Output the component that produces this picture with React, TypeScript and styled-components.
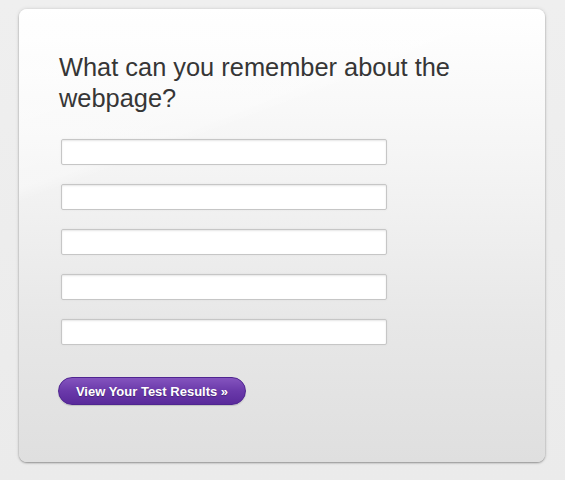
import React from "react";
import styled, { createGlobalStyle } from "styled-components";

const GlobalStyle = createGlobalStyle`
  html, body {
    margin: 0;
    padding: 0;
    background: #ececec;
    font-family: "Liberation Sans", Arial, sans-serif;
  }
`;

const Page = styled.div`
  width: 565px;
  height: 480px;
  padding: 9px 20px 18px 19px;
  box-sizing: border-box;
  background: linear-gradient(180deg, #efefef 0%, #ebebeb 100%);
`;

const Card = styled.div`
  position: relative;
  height: 453px;
  box-sizing: border-box;
  padding: 43px 40px 0 40px;
  border-radius: 8px;
  overflow: hidden;
  background: linear-gradient(180deg, #ffffff 0%, #f4f4f4 35%, #e7e7e7 70%, #dfdfdf 100%);
  box-shadow: 0 1px 2px rgba(0, 0, 0, 0.35), 0 0 4px rgba(0, 0, 0, 0.12);

  &::before {
    content: "";
    position: absolute;
    inset: 0;
    background: linear-gradient(160deg, rgba(255, 255, 255, 0.45) 0%, rgba(255, 255, 255, 0.3) 28%, rgba(255, 255, 255, 0) 30%);
    pointer-events: none;
  }
`;

const Content = styled.div`
  position: relative;
  display: flex;
  flex-direction: column;
  align-items: flex-start;
`;

const Title = styled.h1`
  margin: 0 0 25px;
  font-size: 25.4px;
  line-height: 31px;
  font-weight: normal;
  color: #363636;
  width: 420px;
`;

const Fields = styled.div`
  display: flex;
  flex-direction: column;
  gap: 19px;
  padding-left: 2px;
`;

const Field = styled.input`
  width: 326px;
  height: 26px;
  box-sizing: border-box;
  border: 1px solid #c6c6c6;
  border-radius: 2px;
  background: #fff;
  box-shadow: inset 0 1px 2px rgba(0, 0, 0, 0.1), 0 0 3px rgba(0, 0, 0, 0.05);
  outline: none;
  padding: 0 6px;
  font-family: inherit;
  font-size: 13px;
`;

const Button = styled.button`
  margin-top: 32px;
  margin-left: -1px;
  height: 28px;
  width: 188px;
  border-radius: 14px;
  border: 1px solid #4f2590;
  background: linear-gradient(180deg, #8454be 0%, #6a39aa 50%, #5a2a9b 100%);
  color: #fff;
  font-family: inherit;
  font-weight: bold;
  font-size: 13px;
  text-shadow: 0 1px 1px rgba(0, 0, 0, 0.3);
  box-shadow: 0 1px 1px rgba(0, 0, 0, 0.15);
  cursor: pointer;
  padding: 0;
`;

export default function App() {
  return (
    <>
      <GlobalStyle />
      <Page>
        <Card>
          <Content>
            <Title>What can you remember about the webpage?</Title>
            <Fields>
              {[0, 1, 2, 3, 4].map((i) => (
                <Field key={i} type="text" />
              ))}
            </Fields>
            <Button>View Your Test Results »</Button>
          </Content>
        </Card>
      </Page>
    </>
  );
}
